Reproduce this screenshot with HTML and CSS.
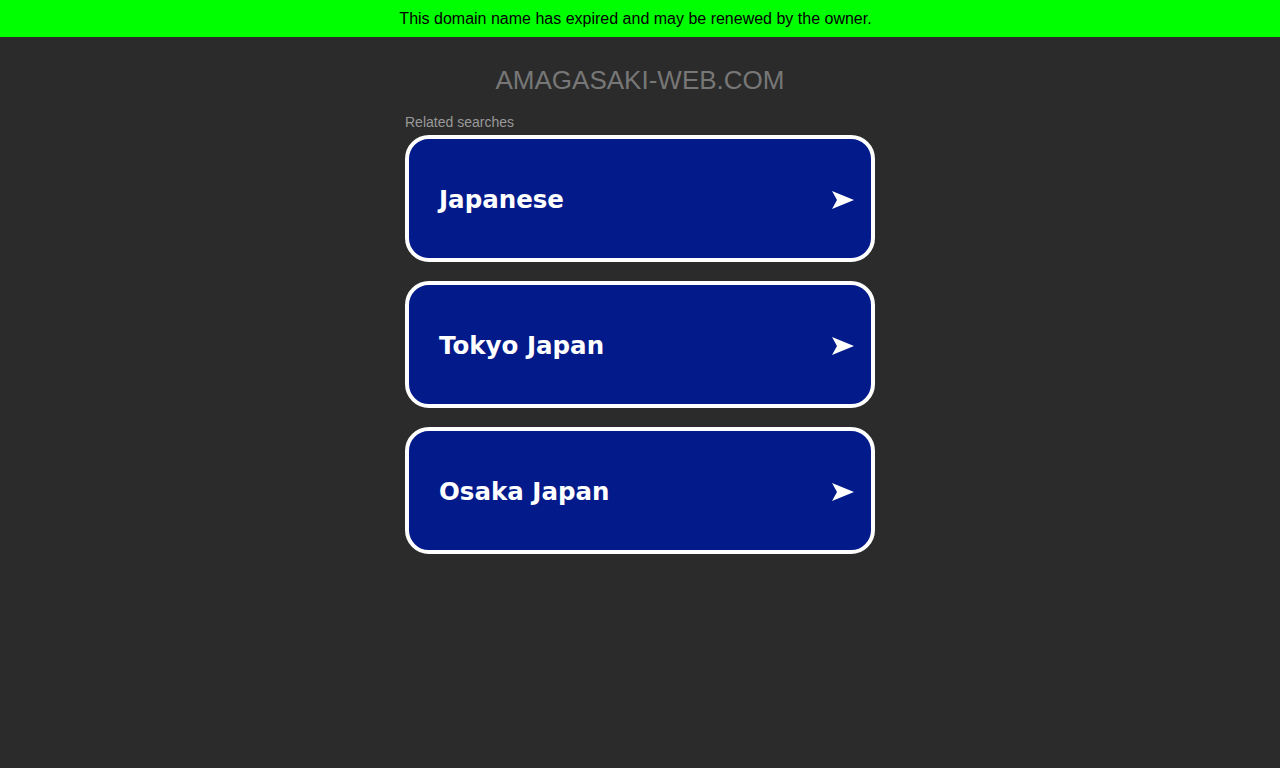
FILE: index.html
```html
<!DOCTYPE html>
<html>
<head>
<meta charset="utf-8">
<link rel="stylesheet" href="styles.css">
</head>
<body>
<div class="banner">This domain name has expired and may be renewed by the owner.</div>
<div class="main">
  <h1 class="domain">AMAGASAKI-WEB.COM</h1>
  <div class="related">Related searches</div>
  <div class="list">
    <a class="item" href="#"><span class="label">Japanese</span><svg class="arrow" width="22" height="18" viewBox="0 0 22 18"><path d="M0 0 L22 9 L0 18 L5 9 Z" fill="#fff"/></svg></a>
    <a class="item" href="#"><span class="label">Tokyo Japan</span><svg class="arrow" width="22" height="18" viewBox="0 0 22 18"><path d="M0 0 L22 9 L0 18 L5 9 Z" fill="#fff"/></svg></a>
    <a class="item" href="#"><span class="label">Osaka Japan</span><svg class="arrow" width="22" height="18" viewBox="0 0 22 18"><path d="M0 0 L22 9 L0 18 L5 9 Z" fill="#fff"/></svg></a>
  </div>
</div>
</body>
</html>
```
FILE: styles.css
```css
html, body {
  margin: 0;
  padding: 0;
  background: #2b2b2b;
  font-family: "Liberation Sans", Arial, sans-serif;
}
.banner {
  background: #00ff00;
  color: #000;
  height: 37px;
  display: flex;
  align-items: center;
  justify-content: center;
  padding-right: 9px;
  font-size: 16px;
}
.main {
  width: 470px;
  margin: 0 auto;
  display: flex;
  flex-direction: column;
}
.domain {
  margin: 28px 0 0;
  text-align: center;
  font-weight: normal;
  font-size: 26px;
  line-height: 30px;
  color: #777777;
}
.related {
  margin-top: 19px;
  font-size: 14px;
  line-height: 16px;
  color: #999999;
}
.list {
  margin-top: 5px;
  display: flex;
  flex-direction: column;
  gap: 19px;
}
.item {
  box-sizing: border-box;
  height: 127px;
  border: 4px solid #ffffff;
  border-radius: 24px;
  background: #021a8a;
  display: flex;
  align-items: center;
  justify-content: space-between;
  padding: 2px 17px 0 30px;
  text-decoration: none;
}
.label {
  font-family: "DejaVu Sans", Verdana, sans-serif;
  font-weight: bold;
  font-size: 24.5px;
  color: #ffffff;
}
.arrow {
  display: block;
}
```
